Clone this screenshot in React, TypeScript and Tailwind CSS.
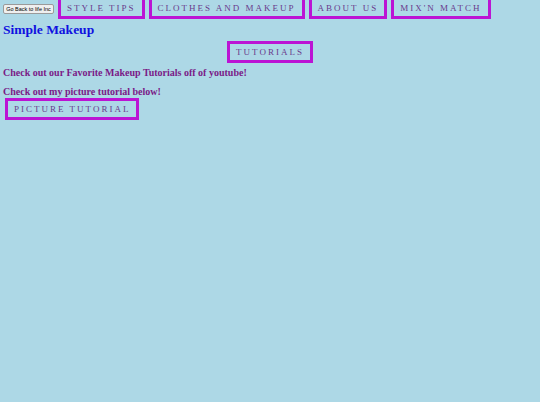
import React from "react";

const navBox =
  "inline-block whitespace-nowrap border-[3px] border-[#bb14d4] px-[6px] pt-[3px] pb-[2px] text-[9px] leading-[11px] tracking-[2px] uppercase text-[#6a3a8c]";

export default function App() {
  return (
    <div
      className="min-h-[405px] w-full bg-[#add8e6]"
      style={{ fontFamily: '"Liberation Serif", "Times New Roman", serif' }}
    >
      <div className="flex items-start gap-[4px] pl-[3px] -mt-[3px]">
        <button
          className="mt-[7px] h-[10px] w-[51px] whitespace-nowrap rounded-[2px] border border-[#9a9a9a] bg-[#efefef] text-[5.5px] leading-[8px] text-black"
          style={{ fontFamily: '"Liberation Sans", Arial, sans-serif' }}
        >
          Go Back to life Inc
        </button>
        <span className={navBox}>Style Tips</span>
        <span className={navBox}>Clothes and Makeup</span>
        <span className={navBox}>About Us</span>
        <span className={navBox}>Mix'n Match</span>
      </div>
      <h1 className="mt-[3px] pl-[3px] text-[13.5px] font-bold leading-[16px] text-[#1010e0]">
        Simple Makeup
      </h1>
      <div className="mt-[3px] flex justify-center">
        <span className={navBox}>Tutorials</span>
      </div>
      <p className="mt-[3px] pl-[3px] text-[10px] font-bold leading-[13px] text-[#7a1a86]">
        Check out our Favorite Makeup Tutorials off of youtube!
      </p>
      <p className="mt-[6px] pl-[3px] text-[10px] font-bold leading-[13px] text-[#7a1a86]">
        Check out my picture tutorial below!
      </p>
      <div className="-mt-[3px] pl-[5px]">
        <span className={navBox}>Picture Tutorial</span>
      </div>
    </div>
  );
}
